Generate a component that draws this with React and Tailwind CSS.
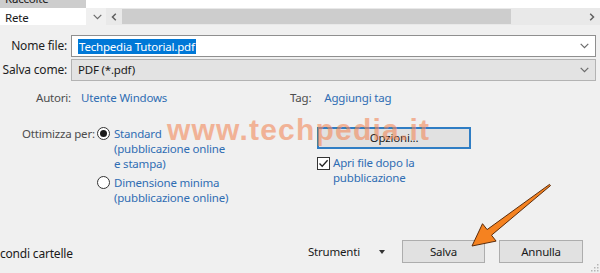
import React from "react";

const Chevron = ({ className = "" }) => (
  <svg width="9" height="6" viewBox="0 0 9 6" className={className}>
    <path d="M0.7 0.8 L4.5 4.6 L8.3 0.8" fill="none" stroke="#6b6b6b" strokeWidth="1.2" />
  </svg>
);

const Radio = ({ checked }) => (
  <div className="w-[13px] h-[13px] rounded-full border border-[#333333] bg-white flex items-center justify-center shrink-0">
    {checked && <div className="w-[7px] h-[7px] rounded-full bg-[#1a1a1a]" />}
  </div>
);

export default function App() {
  const font = { fontFamily: '"Noto Sans", "Open Sans", sans-serif' };
  return (
    <div
      className="relative w-[600px] h-[273px] overflow-hidden bg-[#f0f0f0] text-[11.5px] tracking-[-0.2px] text-[#1a1a1a] flex flex-col"
      style={font}
    >
      {/* top: nav pane + scrollbar */}
      <div className="flex h-[8px] bg-white shrink-0">
        <div className="w-[86px] bg-[#cdcdcd] overflow-hidden leading-[15px] pl-[5px]">
          <div className="-mt-[9px]">Raccolte</div>
        </div>
      </div>
      <div className="flex h-[17px] shrink-0">
        <div className="w-[86px] bg-white pl-[5px] leading-[17px] pt-[1px]">Rete</div>
        <div className="w-[20px] flex items-center justify-center pl-[2px] bg-[#f0f0f0]">
          <Chevron />
        </div>
        <div className="flex-1 flex items-center bg-[#e9e9e9]">
          <div className="w-[16px] flex items-center justify-center">
            <svg width="6" height="8" viewBox="0 0 6 8">
              <path d="M4.8 0.8 L1.5 4 L4.8 7.2" fill="none" stroke="#606060" strokeWidth="1.5" />
            </svg>
          </div>
          <div className="w-[389px] h-[15px] bg-[#cdcdcd]" />
          <div className="flex-1" />
          <div className="w-[16px] flex items-center justify-center">
            <svg width="6" height="8" viewBox="0 0 6 8">
              <path d="M1.2 0.8 L4.5 4 L1.2 7.2" fill="none" stroke="#606060" strokeWidth="1.5" />
            </svg>
          </div>
        </div>
      </div>

      {/* Nome file */}
      <div className="flex items-center h-[22px] mt-[10px] shrink-0">
        <div className="w-[67px] text-right text-[12px] text-[#1e1e1e]">Nome file:</div>
        <div className="ml-[4px] mr-[4px] flex-1 h-[22px] bg-white border border-[#8f8f8f] flex items-center pl-[6px] pr-[6px]">
          <span className="bg-[#0078d7] text-white leading-[15px] px-[1px]">Techpedia Tutorial.pdf</span>
          <div className="flex-1" />
          <Chevron />
        </div>
      </div>
      {/* Salva come */}
      <div className="flex items-center h-[22px] mt-[2px] shrink-0">
        <div className="w-[67px] text-right text-[12px] text-[#1e1e1e]">Salva come:</div>
        <div className="ml-[4px] mr-[4px] flex-1 h-[22px] bg-[#e3e3e3] border border-[#b3b3b3] flex items-center pl-[6px] pr-[6px]">
          <span>PDF (*.pdf)</span>
          <div className="flex-1" />
          <Chevron />
        </div>
      </div>

      {/* Autori / Tag */}
      <div className="flex items-center h-[16px] mt-[9px] shrink-0">
        <div className="w-[290px] flex items-center">
          <div className="w-[71px] text-right text-[#4d4d4d]">Autori:</div>
          <div className="ml-[10px] text-[#2f6db3]">Utente Windows</div>
        </div>
        <div className="text-[#4d4d4d]">Tag:</div>
        <div className="ml-[13px] text-[#2f6db3]">Aggiungi tag</div>
      </div>

      {/* Ottimizza */}
      <div className="flex mt-[20px] shrink-0">
        <div className="w-[317px] flex">
          <div className="w-[97px] pl-[22px] leading-[15px] text-[#4d4d4d]">Ottimizza per:</div>
          <div className="flex flex-col">
            <div className="flex items-start">
              <div className="mt-[1px]"><Radio checked /></div>
              <div className="ml-[4px] leading-[15px] text-[#2f6db3]">
                Standard
                <br />
                (pubblicazione online
                <br />
                e stampa)
              </div>
            </div>
            <div className="flex items-start mt-[4px]">
              <div className="mt-[1px]"><Radio /></div>
              <div className="ml-[4px] leading-[15px] text-[#2f6db3]">
                Dimensione minima
                <br />
                (pubblicazione online)
              </div>
            </div>
          </div>
        </div>
        <div className="flex flex-col">
          <div className="mt-[1px] w-[154px] h-[22px] border-2 border-[#2f7dc4] bg-[#e1e1e1] flex items-center justify-center text-[#1a1a1a]">
            Opzioni...
          </div>
          <div className="flex items-start mt-[6px]">
            <div className="mt-[2px] w-[13px] h-[13px] border border-[#333333] bg-white flex items-center justify-center shrink-0">
              <svg width="11" height="11" viewBox="0 0 11 11">
                <path d="M1.5 5.5 L4.2 8.3 L9.6 2.2" fill="none" stroke="#222222" strokeWidth="1.3" />
              </svg>
            </div>
            <div className="ml-[3px] leading-[15px] text-[#2f6db3]">
              Apri file dopo la
              <br />
              pubblicazione
            </div>
          </div>
        </div>
      </div>

      {/* bottom row */}
      <div className="mt-auto mb-[10px] flex items-center h-[23px] shrink-0">
        <div className="mt-[5px] text-[12px] text-[#1a1a1a]">condi cartelle</div>
        <div className="flex-1" />
        <div className="text-[#1a1a1a]">Strumenti</div>
        <div className="ml-[19px] mr-[17px] w-0 h-0 border-l-[3px] border-r-[3px] border-t-[4px] border-l-transparent border-r-transparent border-t-[#333333]" />
        <div className="w-[83px] h-[23px] border border-[#adadad] bg-[#e1e1e1] flex items-center justify-center">Salva</div>
        <div className="ml-[14px] mr-[17px] w-[84px] h-[23px] border border-[#adadad] bg-[#e1e1e1] flex items-center justify-center">
          Annulla
        </div>
      </div>

      {/* resize grip */}
      <svg className="absolute right-[1px] bottom-[1px]" width="9" height="9" viewBox="0 0 9 9">
        <rect x="7" y="1" width="1.5" height="1.5" fill="#b5b5b5" />
        <rect x="4" y="4" width="1.5" height="1.5" fill="#b5b5b5" />
        <rect x="7" y="4" width="1.5" height="1.5" fill="#b5b5b5" />
        <rect x="1" y="7" width="1.5" height="1.5" fill="#b5b5b5" />
        <rect x="4" y="7" width="1.5" height="1.5" fill="#b5b5b5" />
        <rect x="7" y="7" width="1.5" height="1.5" fill="#b5b5b5" />
      </svg>

      {/* watermark */}
      <div
        className="absolute left-[167px] top-[113px] text-[30px] font-bold tracking-[1.2px] text-[#f28a5c] opacity-60 leading-[34px] pointer-events-none"
        style={{ fontFamily: '"Liberation Sans", Arial, sans-serif' }}
      >
        www.techpedia.it
      </div>

      {/* orange arrow */}
      <svg className="absolute left-0 top-0 pointer-events-none" width="600" height="273" viewBox="0 0 600 273">
        <polygon
          points="549.5,184.4 487.1,229.6 482.5,223.7 472,246 496.1,241.1 491.5,235.2 550.5,185.6"
          fill="#f58220"
          stroke="#5c2c0a"
          strokeWidth="1"
          strokeLinejoin="round"
        />
      </svg>
    </div>
  );
}
